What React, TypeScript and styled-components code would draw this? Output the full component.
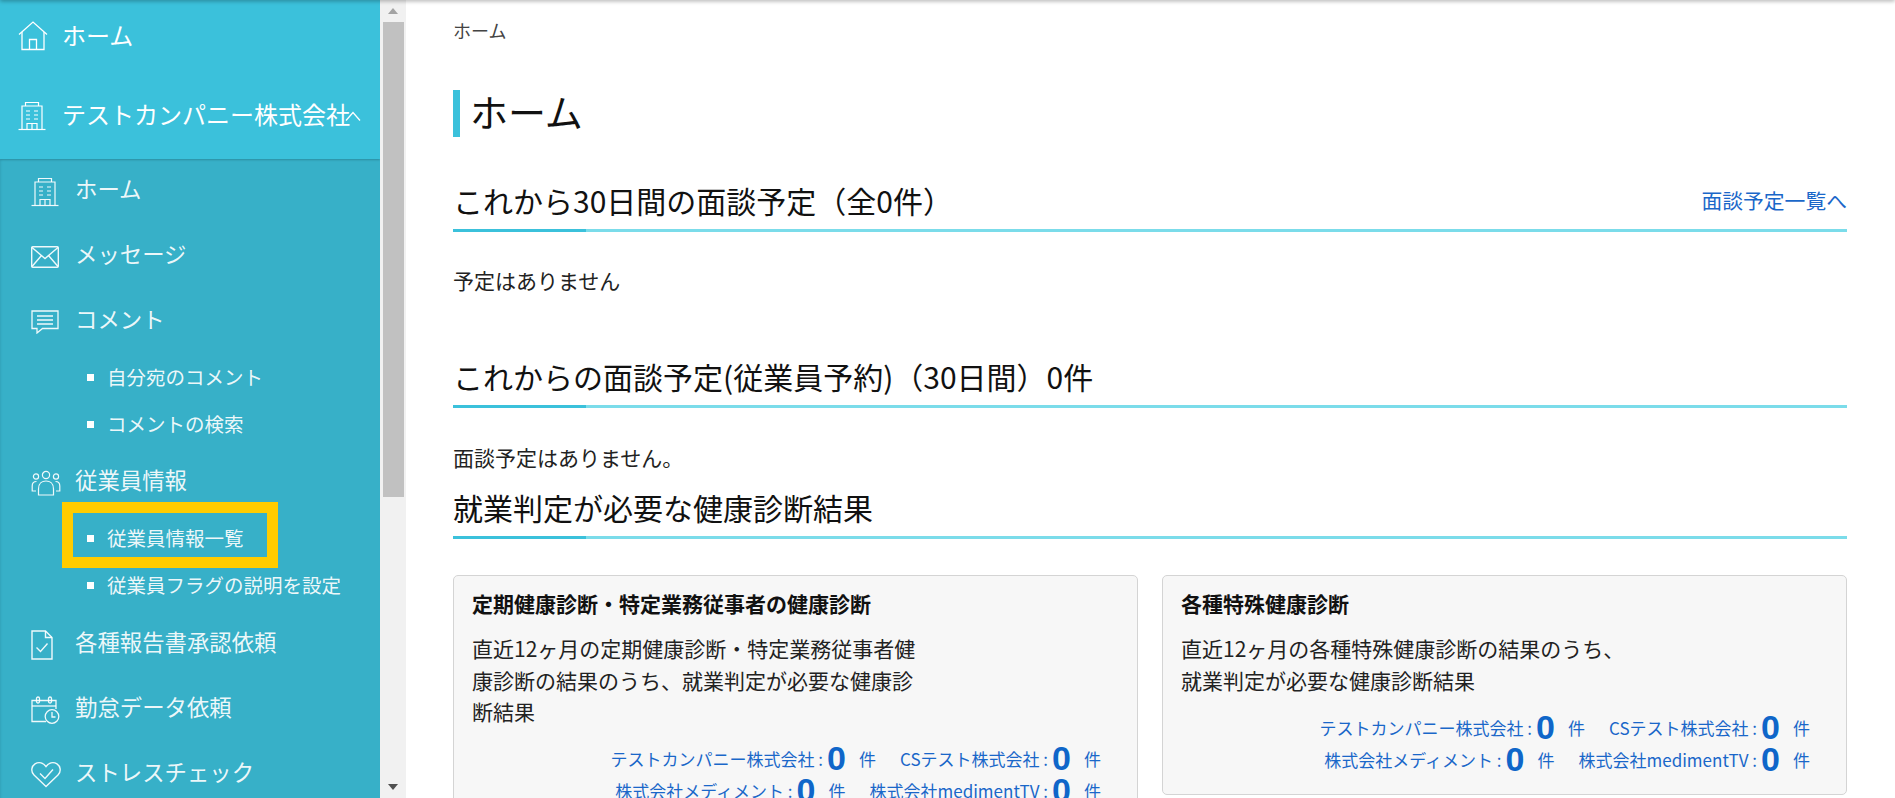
import React from "react";
import styled, { createGlobalStyle } from "styled-components";

const GlobalStyle = createGlobalStyle`
  html, body {
    margin: 0;
    height: 100%;
    overflow: hidden;
  }
  body {
    background: #fff;
    color: #111;
    font-family: "Noto Sans CJK JP", "Noto Sans", sans-serif;
  }
`;

const HomeIcon = () => (
  <svg viewBox="0 0 30 30" width="30" height="30" fill="none" stroke="currentColor" strokeWidth="1.3">
    <path d="M1 13.5 15 1l14 12.5" />
    <path d="M4 11v17.5h22V11" />
    <path d="M11.5 28.5V18.5h7v10" />
  </svg>
);

const BuildingIcon = () => (
  <svg viewBox="0 0 28 30" width="28" height="30" fill="none" stroke="currentColor" strokeWidth="1.2">
    <path d="M0.5 28.5h27" />
    <path d="M4 28.5V5h20v23.5" />
    <path d="M7.5 5V1.5h13V5" />
    <path d="M8 10h4M16 10h4M8 14h4M16 14h4M8 18h4M16 18h4" />
    <path d="M9 28.5v-6h10v6M14 22.5v6" />
  </svg>
);

const MailIcon = () => (
  <svg viewBox="0 0 28 22" width="28" height="22" fill="none" stroke="currentColor" strokeWidth="1.4">
    <rect x="0.7" y="0.7" width="26.6" height="20.6" rx="1" />
    <path d="M1 1.5 14 12.5 27 1.5" />
    <path d="M1 20.5 10.5 9.5M27 20.5 17.5 9.5" />
  </svg>
);

const CommentIcon = () => (
  <svg viewBox="0 0 28 24" width="28" height="24" fill="none" stroke="currentColor" strokeWidth="1.3">
    <path d="M1 1h26v17.5H11.5L6 23v-4.5H1z" />
    <path d="M6 6h16M6 10h16M6 14h16" />
  </svg>
);

const PeopleIcon = () => (
  <svg viewBox="0 0 30 26" width="30" height="26" fill="none" stroke="currentColor" strokeWidth="1.2">
    <circle cx="15" cy="5" r="3.6" />
    <circle cx="5" cy="6.5" r="2.6" />
    <circle cx="25" cy="6.5" r="2.6" />
    <path d="M7.5 25v-6c0-6 4-8 7.5-8s7.5 2 7.5 8v6z" />
    <path d="M5 21H1.2v-5c0-3 1.5-4.5 4.3-4.5M25 21h3.8v-5c0-3-1.5-4.5-4.3-4.5" />
  </svg>
);

const DocCheckIcon = () => (
  <svg viewBox="0 0 22 30" width="22" height="30" fill="none" stroke="currentColor" strokeWidth="1.4">
    <path d="M1 1h13.5L21 7.5V29H1z" />
    <path d="M14.5 1v6.5H21" />
    <path d="M5.5 17.5 9.5 21.5 16.5 13.5" />
  </svg>
);

const CalendarIcon = () => (
  <svg viewBox="0 0 29 28" width="29" height="28" fill="none" stroke="currentColor" strokeWidth="1.3">
    <path d="M15 25.5H1V4.5h24V13" />
    <path d="M1 10h24" />
    <rect x="5.5" y="1" width="3" height="6" rx="1.5" />
    <rect x="17.5" y="1" width="3" height="6" rx="1.5" />
    <circle cx="21" cy="20.5" r="6.8" fill="#37b0c8" />
    <path d="M21 16v5h3.5" />
  </svg>
);

const HeartIcon = () => (
  <svg viewBox="0 0 30 27" width="30" height="27" fill="none" stroke="currentColor" strokeWidth="1.4">
    <path d="M15 25.5 3 14C-.5 10.5.5 5 4 2.8 8 .5 12.5 1.8 15 5.5c2.5-3.7 7-5 11-2.7 3.5 2.2 4.5 7.7 1 11.2z" />
    <path d="M9 12.5 14 17.5 22 8.5" />
  </svg>
);

const ChevronIcon = () => (
  <svg viewBox="0 0 16 10" width="16" height="10" fill="none" stroke="currentColor" strokeWidth="1.3">
    <path d="M1 9.5 8 1.5l7 8" />
  </svg>
);

const Page = styled.div`
  display: flex;
  height: 798px;
  overflow: hidden;
  position: relative;

  &::after {
    content: "";
    position: absolute;
    left: 0;
    right: 0;
    top: -4px;
    height: 4px;
    box-shadow: 0 1px 4px rgba(0, 0, 0, 0.35);
  }
`;

const Sidebar = styled.aside`
  width: 380px;
  flex: none;
  display: flex;
  flex-direction: column;
  background: #37b0c8;
  color: #fff;
  overflow: hidden;
`;

const TopPanel = styled.div`
  background: #3bc1db;
  height: 159px;
  flex: none;
  box-shadow: 0 1px 2px rgba(0, 0, 0, 0.2);
  position: relative;
`;

const TopRow = styled.div<{ $height: number }>`
  height: ${(p) => p.$height}px;
  display: flex;
  align-items: center;
  padding-left: 18px;
  font-size: 24px;
  white-space: nowrap;
`;

const TopIcon = styled.span`
  width: 44px;
  display: flex;
  flex: none;
`;

const TopLabel = styled.span`
  padding-bottom: 4px;
`;

const TopChevron = styled.span`
  display: flex;
  margin-left: -5px;
`;

const NavList = styled.nav`
  display: flex;
  flex-direction: column;
  color: rgba(255, 255, 255, 0.92);
  box-shadow: inset 2px 0 2px -1px rgba(0, 0, 0, 0.08);
`;

const NavItem = styled.div<{ $spaced?: boolean }>`
  height: 65px;
  flex: none;
  display: flex;
  align-items: center;
  font-size: 22.4px;
  white-space: nowrap;
  margin-top: ${(p) => (p.$spaced ? 2 : 0)}px;
`;

const NavIcon = styled.span`
  width: 44px;
  margin-left: 30px;
  display: flex;
  justify-content: flex-start;
  padding-left: 1px;
  flex: none;
`;

const NavLabel = styled.span`
  padding-bottom: 7px;
`;

const SubList = styled.div<{ $gapAfter?: number }>`
  display: flex;
  flex-direction: column;
  margin-bottom: ${(p) => p.$gapAfter ?? 0}px;
`;

const SubItem = styled.div<{ $boxed?: boolean }>`
  height: 47px;
  display: flex;
  align-items: center;
  padding-left: 87px;
  font-size: 19.5px;
  white-space: nowrap;
  position: relative;

  &::before {
    content: "";
    width: 7px;
    height: 7px;
    background: #fff;
    margin-right: 13px;
    flex: none;
  }

  ${(p) =>
    p.$boxed &&
    `
    &::after {
      content: "";
      position: absolute;
      left: 62px;
      top: -13px;
      width: 216px;
      height: 66px;
      box-sizing: border-box;
      border: 11px solid #ffcc00;
    }
  `}
`;

const SubLabel = styled.span`
  padding-bottom: 2px;
`;

const Scrollbar = styled.div`
  width: 26px;
  flex: none;
  background: #f1f1f1;
  display: flex;
  flex-direction: column;
  align-items: center;
`;

const ScrollButton = styled.div<{ $down?: boolean }>`
  height: 22px;
  flex: none;
  display: flex;
  align-items: center;
  justify-content: center;
  width: 100%;

  &::before {
    content: "";
    border-left: 5.5px solid transparent;
    border-right: 5.5px solid transparent;
    ${(p) =>
      p.$down
        ? "border-top: 6px solid #505050;"
        : "border-bottom: 6px solid #a3a3a3;"}
  }
`;

const ScrollThumb = styled.div`
  width: 21px;
  height: 475px;
  flex: none;
  background: #c1c1c1;
`;

const ScrollSpacer = styled.div`
  flex: 1;
`;

const Main = styled.main`
  flex: 1;
  min-width: 0;
  padding: 0 48px 0 47px;
  display: flex;
  flex-direction: column;
`;

const Breadcrumb = styled.div`
  height: 60px;
  flex: none;
  display: flex;
  align-items: center;
  font-size: 18px;
  color: #444;
`;

const PageTitle = styled.h1`
  margin: 30px 0 0;
  height: 47px;
  flex: none;
  box-sizing: border-box;
  display: flex;
  align-items: center;
  border-left: 7px solid #3bc1db;
  padding: 0 0 6px 10px;
  font-size: 38px;
  font-weight: 400;
  color: #111;
`;

const SectionHeader = styled.div<{ $top: number }>`
  margin-top: ${(p) => p.$top}px;
  height: 49px;
  flex: none;
  padding-bottom: 5px;
  display: flex;
  align-items: center;
  justify-content: space-between;
  border-bottom: 3px solid #7bdcea;
  position: relative;

  &::after {
    content: "";
    position: absolute;
    left: 0;
    bottom: -3px;
    width: 133px;
    height: 3px;
    background: #3bc1db;
  }
`;

const SectionTitle = styled.h2`
  margin: 0;
  font-size: 30px;
  font-weight: 400;
  color: #111;
`;

const SectionLink = styled.a`
  font-size: 20.8px;
  color: #1a67c9;
`;

const BodyText = styled.p<{ $top: number }>`
  margin: ${(p) => p.$top}px 0 0;
  font-size: 21px;
  line-height: 32px;
  color: #222;
  flex: none;
`;

const Cards = styled.div`
  margin-top: 36px;
  display: grid;
  grid-template-columns: 1fr 1fr;
  gap: 24px;
  align-items: start;
  flex: none;
`;

const Card = styled.section`
  background: #f7f7f7;
  border: 1px solid #d4d4d4;
  border-radius: 5px;
  padding: 10px 18px 19px;
`;

const CardTitle = styled.h3`
  margin: 0 0 13px;
  font-size: 21px;
  line-height: 34px;
  font-weight: 700;
  color: #111;
`;

const CardText = styled.p`
  margin: 0 0 15px;
  font-size: 21px;
  line-height: 31.5px;
  color: #222;
  max-width: 450px;
`;

const CountRow = styled.div`
  display: flex;
  justify-content: flex-end;
  gap: 24px;
  height: 32px;
  padding-right: 18px;
  color: #1a67c9;
  font-size: 17px;
  white-space: nowrap;
`;

const CountItem = styled.span`
  display: flex;
  align-items: center;
`;

const CountLabel = styled.span``;

const CountValue = styled.b`
  font-family: "Liberation Sans", sans-serif;
  font-size: 34px;
  line-height: 31px;
  margin: 0 13px 0 4px;
  color: #0f66c9;
`;

const CountUnit = styled.span``;

const Counts: React.FC<{ rows: string[][] }> = ({ rows }) => (
  <>
    {rows.map((row, i) => (
      <CountRow key={i}>
        {row.map((label) => (
          <CountItem key={label}>
            <CountLabel>{label} :</CountLabel>
            <CountValue>0</CountValue>
            <CountUnit>件</CountUnit>
          </CountItem>
        ))}
      </CountRow>
    ))}
  </>
);

const countRows = [
  ["テストカンパニー株式会社", "CSテスト株式会社"],
  ["株式会社メディメント", "株式会社medimentTV"],
];

const App: React.FC = () => (
  <Page>
    <GlobalStyle />
    <Sidebar>
      <TopPanel>
        <TopRow $height={72}>
          <TopIcon><HomeIcon /></TopIcon>
          <TopLabel>ホーム</TopLabel>
        </TopRow>
        <TopRow $height={87}>
          <TopIcon><BuildingIcon /></TopIcon>
          <TopLabel>テストカンパニー株式会社</TopLabel>
          <TopChevron><ChevronIcon /></TopChevron>
        </TopRow>
      </TopPanel>
      <NavList>
        <NavItem><NavIcon><BuildingIcon /></NavIcon><NavLabel>ホーム</NavLabel></NavItem>
        <NavItem><NavIcon><MailIcon /></NavIcon><NavLabel>メッセージ</NavLabel></NavItem>
        <NavItem><NavIcon><CommentIcon /></NavIcon><NavLabel>コメント</NavLabel></NavItem>
        <SubList>
          <SubItem><SubLabel>自分宛のコメント</SubLabel></SubItem>
          <SubItem><SubLabel>コメントの検索</SubLabel></SubItem>
        </SubList>
        <NavItem $spaced><NavIcon><PeopleIcon /></NavIcon><NavLabel>従業員情報</NavLabel></NavItem>
        <SubList $gapAfter={3}>
          <SubItem $boxed><SubLabel>従業員情報一覧</SubLabel></SubItem>
          <SubItem><SubLabel>従業員フラグの説明を設定</SubLabel></SubItem>
        </SubList>
        <NavItem><NavIcon><DocCheckIcon /></NavIcon><NavLabel>各種報告書承認依頼</NavLabel></NavItem>
        <NavItem><NavIcon><CalendarIcon /></NavIcon><NavLabel>勤怠データ依頼</NavLabel></NavItem>
        <NavItem><NavIcon><HeartIcon /></NavIcon><NavLabel>ストレスチェック</NavLabel></NavItem>
      </NavList>
    </Sidebar>
    <Scrollbar>
      <ScrollButton />
      <ScrollThumb />
      <ScrollSpacer />
      <ScrollButton $down />
    </Scrollbar>
    <Main>
      <Breadcrumb>ホーム</Breadcrumb>
      <PageTitle>ホーム</PageTitle>
      <SectionHeader $top={38}>
        <SectionTitle>これから30日間の面談予定（全0件）</SectionTitle>
        <SectionLink>面談予定一覧へ</SectionLink>
      </SectionHeader>
      <BodyText $top={32}>予定はありません</BodyText>
      <SectionHeader $top={55}>
        <SectionTitle>これからの面談予定(従業員予約)（30日間）0件</SectionTitle>
      </SectionHeader>
      <BodyText $top={33}>面談予定はありません。</BodyText>
      <SectionHeader $top={9}>
        <SectionTitle>就業判定が必要な健康診断結果</SectionTitle>
      </SectionHeader>
      <Cards>
        <Card>
          <CardTitle>定期健康診断・特定業務従事者の健康診断</CardTitle>
          <CardText>
            直近12ヶ月の定期健康診断・特定業務従事者健康診断の結果のうち、就業判定が必要な健康診断結果
          </CardText>
          <Counts rows={countRows} />
        </Card>
        <Card>
          <CardTitle>各種特殊健康診断</CardTitle>
          <CardText>
            直近12ヶ月の各種特殊健康診断の結果のうち、
            <br />
            就業判定が必要な健康診断結果
          </CardText>
          <Counts rows={countRows} />
        </Card>
      </Cards>
    </Main>
  </Page>
);

export default App;
